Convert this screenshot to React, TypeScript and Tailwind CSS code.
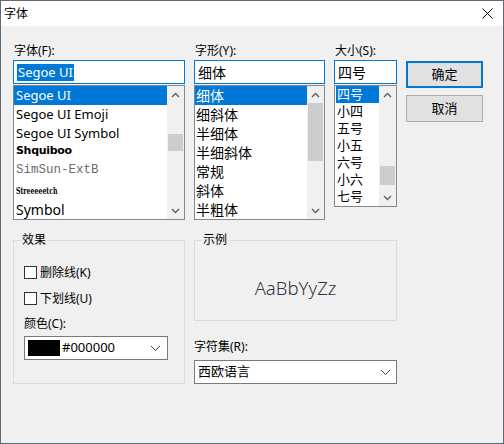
import React from "react";

const ui = "font-['Noto_Sans','Noto_Sans_CJK_SC',sans-serif]";

function Chevron({ dir }: { dir: "up" | "down" }) {
  return (
    <svg width="9" height="6" viewBox="0 0 9 6" className="text-[#606060]">
      <path
        d={dir === "up" ? "M1 5 L4.5 1.5 L8 5" : "M1 1 L4.5 4.5 L8 1"}
        fill="none"
        stroke="currentColor"
        strokeWidth="1.4"
      />
    </svg>
  );
}

function ComboChevron() {
  return (
    <svg width="11" height="7" viewBox="0 0 11 7" className="text-[#404040]">
      <path d="M1 1 L5.5 5.5 L10 1" fill="none" stroke="currentColor" strokeWidth="1" />
    </svg>
  );
}

function ScrollBar({ thumbTop, thumbHeight }: { thumbTop: number; thumbHeight: number }) {
  return (
    <div className="w-[17px] h-full bg-[#f0f0f0] flex flex-col">
      <div className="h-[17px] flex items-center justify-center">
        <Chevron dir="up" />
      </div>
      <div className="flex-1 flex flex-col">
        <div style={{ height: thumbTop }} />
        <div className="mx-[1px] bg-[#cdcdcd]" style={{ height: thumbHeight }} />
      </div>
      <div className="h-[17px] flex items-center justify-center">
        <Chevron dir="down" />
      </div>
    </div>
  );
}

function Label({ children }: { children: React.ReactNode }) {
  return <div className="h-[19px] leading-[19px] text-[12px] text-black pl-[1px]">{children}</div>;
}

function TextBox({ children, size = "text-[13px]" }: { children: React.ReactNode; size?: string }) {
  return (
    <div className={`h-[24px] border border-[#0078d7] bg-white flex items-center px-[3px] text-black ${size}`}>
      {children}
    </div>
  );
}

type Row = { text: string; h: number; cls?: string };

const fonts: Row[] = [
  { text: "Segoe UI", h: 19, cls: "text-[13px]" },
  { text: "Segoe UI Emoji", h: 19, cls: "text-[13px]" },
  { text: "Segoe UI Symbol", h: 19, cls: "text-[13px]" },
  { text: "Shquiboo", h: 17, cls: "text-[11px] font-black font-['DejaVu_Sans',sans-serif] tracking-[-0.3px]" },
  { text: "SimSun-ExtB", h: 21, cls: "text-[12.5px] text-[#6d6d6d] font-['Liberation_Mono',monospace]" },
  { text: "Streeeeetch", h: 18, cls: "text-[10px] font-bold font-['DejaVu_Serif',serif] inline-block origin-left scale-x-[0.62]" },
  { text: "Symbol", h: 20, cls: "text-[14px]" },
];

const styles = ["细体", "细斜体", "半细体", "半细斜体", "常规", "斜体", "半粗体"];
const sizes = ["四号", "小四", "五号", "小五", "六号", "小六", "七号"];

function Check({ label }: { label: string }) {
  return (
    <div className="h-[19px] flex items-center gap-[3px]">
      <div className="w-[13px] h-[13px] border border-[#333333] bg-white" />
      <span className="text-[12px] text-black leading-[19px]">{label}</span>
    </div>
  );
}

export default function App() {
  return (
    <div className={`w-[504px] h-[444px] border border-[#5f6b78] bg-[#f0f0f0] flex flex-col ${ui}`}>
      <div className="h-[25px] bg-white flex items-center justify-between pl-[3px] pr-[10px]">
        <span className="text-[12px] text-black">字体</span>
        <svg width="11" height="11" viewBox="0 0 11 11">
          <path d="M0.5 0.5 L10.5 10.5 M10.5 0.5 L0.5 10.5" stroke="#000" strokeWidth="1" />
        </svg>
      </div>

      <div className="flex flex-col px-[12px]">
        <div className="flex gap-[9px] items-start pt-[15px]">
          <div className="w-[172px] flex flex-col">
            <Label>字体(F):</Label>
            <TextBox>
              <span className="bg-[#0078d7] text-white h-[17px] leading-[17px] px-[1px] text-[13px]">Segoe UI</span>
            </TextBox>
            <div className="mt-[1px] h-[135px] border border-[#828790] bg-white flex">
              <div className="flex-1 flex flex-col">
                {fonts.map((f, i) => (
                  <div
                    key={f.text}
                    style={{ height: f.h }}
                    className={`flex items-center pl-[2px] whitespace-nowrap overflow-hidden ${
                      i === 0 ? "bg-[#0078d7] text-white" : "text-black"
                    }`}
                  >
                    <span className={f.cls}>{f.text}</span>
                  </div>
                ))}
              </div>
              <ScrollBar thumbTop={31} thumbHeight={17} />
            </div>
          </div>

          <div className="w-[131px] flex flex-col">
            <Label>字形(Y):</Label>
            <TextBox size="text-[14px]">细体</TextBox>
            <div className="mt-[1px] h-[135px] border border-[#828790] bg-white flex">
              <div className="flex-1 flex flex-col">
                {styles.map((s, i) => (
                  <div
                    key={s}
                    className={`h-[19px] flex items-center pl-[1px] text-[14px] ${
                      i === 0 ? "bg-[#0078d7] text-white" : "text-black"
                    }`}
                  >
                    {s}
                  </div>
                ))}
              </div>
              <ScrollBar thumbTop={0} thumbHeight={58} />
            </div>
          </div>

          <div className="w-[63px] flex flex-col">
            <Label>大小(S):</Label>
            <TextBox size="text-[14px]">四号</TextBox>
            <div className="mt-[1px] h-[122px] border border-[#828790] bg-white flex">
              <div className="flex-1 flex flex-col pl-[1px]">
                {sizes.map((s, i) => (
                  <div
                    key={s}
                    className={`h-[17px] flex items-center pl-[1px] text-[13px] ${
                      i === 0 ? "bg-[#0078d7] text-white" : "text-black"
                    }`}
                  >
                    {s}
                  </div>
                ))}
              </div>
              <ScrollBar thumbTop={63} thumbHeight={19} />
            </div>
          </div>

          <div className="w-[77px] flex flex-col gap-[7px] pt-[20px]">
            <button className="h-[27px] border-2 border-[#0078d7] bg-[#e1e1e1] text-[13px] text-black">确定</button>
            <button className="h-[27px] border border-[#adadad] bg-[#e1e1e1] text-[13px] text-black">取消</button>
          </div>
        </div>

        <div className="flex gap-[9px] items-start mt-[20px]">
          <div className="relative w-[172px] h-[144px] border border-[#dcdcdc] flex flex-col pl-[10px] pt-[22px]">
            <span className="absolute -top-[10px] left-[7px] px-[1px] bg-[#f0f0f0] text-[12px] leading-[18px] text-black">
              效果
            </span>
            <Check label="删除线(K)" />
            <div className="mt-[7px]">
              <Check label="下划线(U)" />
            </div>
            <div className="mt-[7px] h-[18px] leading-[18px] text-[12px] text-black">颜色(C):</div>
            <div className="mt-[3px] w-[144px] h-[24px] border border-[#7a7a7a] bg-white flex items-center pl-[3px] pr-[6px]">
              <div className="w-[32px] h-[16px] bg-black" />
              <span className="ml-[2px] text-[13px] text-black flex-1">#000000</span>
              <ComboChevron />
            </div>
          </div>

          <div className="w-[203px] flex flex-col">
            <div className="relative h-[81px] border border-[#dcdcdc] flex items-center justify-center pt-[14px]">
              <span className="absolute -top-[10px] left-[7px] px-[1px] bg-[#f0f0f0] text-[12px] leading-[18px] text-black">
                示例
              </span>
              <span className="text-[18.5px] font-light text-[#333344]">AaBbYyZz</span>
            </div>
            <div className="mt-[17px] h-[18px] leading-[18px] text-[12px] text-black">字符集(R):</div>
            <div className="mt-[4px] h-[24px] border border-[#7a7a7a] bg-white flex items-center pl-[3px] pr-[5px]">
              <span className="flex-1 text-[13px] text-black">西欧语言</span>
              <ComboChevron />
            </div>
          </div>
        </div>
      </div>
    </div>
  );
}
